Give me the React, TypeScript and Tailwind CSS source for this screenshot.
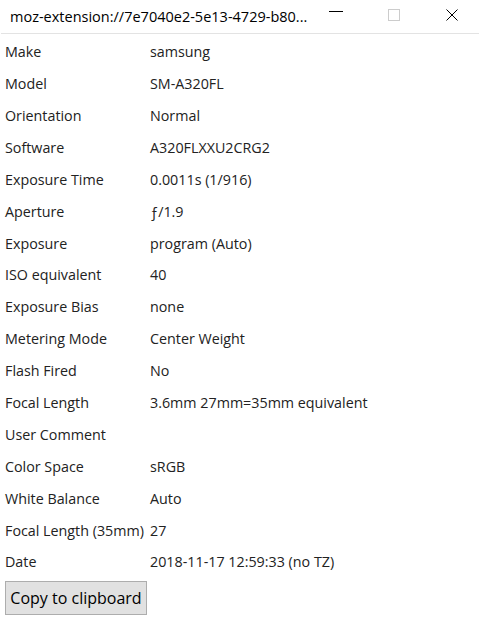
import React from "react";

const rows: [string, string][] = [
  ["Make", "samsung"],
  ["Model", "SM-A320FL"],
  ["Orientation", "Normal"],
  ["Software", "A320FLXXU2CRG2"],
  ["Exposure Time", "0.0011s (1/916)"],
  ["Aperture", "\u0192/1.9"],
  ["Exposure", "program (Auto)"],
  ["ISO equivalent", "40"],
  ["Exposure Bias", "none"],
  ["Metering Mode", "Center Weight"],
  ["Flash Fired", "No"],
  ["Focal Length", "3.6mm 27mm=35mm equivalent"],
  ["User Comment", ""],
  ["Color Space", "sRGB"],
  ["White Balance", "Auto"],
  ["Focal Length (35mm)", "27"],
  ["Date", "2018-11-17 12:59:33 (no TZ)"],
];

export default function App() {
  return (
    <div className="w-[480px] h-[624px] bg-white text-[#1a1a1a] overflow-hidden" style={{ fontFamily: '"Open Sans", "Noto Sans", sans-serif' }}>
      {/* window title bar */}
      <div className="h-[34px] flex items-center mx-[1px] border-b border-[#e3e3e3]">
        <span className="pl-[9px] text-[14.5px] text-black flex-1 whitespace-nowrap">moz-extension://7e7040e2-5e13-4729-b80...</span>
        <div className="flex items-center h-full">
          <div className="w-[58px] flex justify-center">
            <div className="w-[14px] h-px bg-black mt-[-6px]" />
          </div>
          <div className="w-[58px] flex justify-center">
            <div className="w-[12px] h-[12px] border border-[#cccccc] mt-[-4px]" />
          </div>
          <div className="w-[58px] flex justify-center">
            <svg width="12" height="12" viewBox="0 0 12 12" className="mt-[-4px]">
              <path d="M0.5 0.5 L11.5 11.5 M11.5 0.5 L0.5 11.5" stroke="#000" strokeWidth="1" />
            </svg>
          </div>
        </div>
      </div>

      <div className="px-[5px] pt-[2px] text-[14.3px] text-[#222]">
        {rows.map(([k, v]) => (
          <div key={k} className="grid grid-cols-[145px_1fr] h-[31.9px] items-center">
            <span className="whitespace-nowrap">{k}</span>
            <span className="whitespace-nowrap">{v}</span>
          </div>
        ))}
        <button className="mt-[3px] w-[142px] h-[34px] bg-[#e1e1e1] border border-[#adadad] text-[16px] text-black">
          Copy to clipboard
        </button>
      </div>
    </div>
  );
}
